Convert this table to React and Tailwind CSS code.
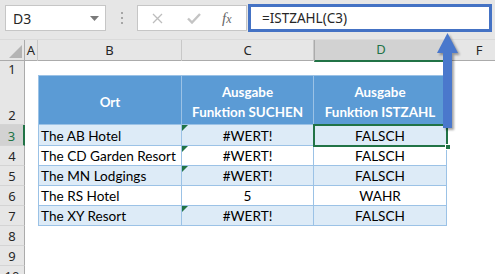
import React from "react";

const ui = { fontFamily: '"Noto Sans", "Open Sans", sans-serif' };
const cell = { fontFamily: 'Lato, "Open Sans", sans-serif' };

// Excel-like sheet rows under the table header
const rows = [
  { n: 3, ort: "The AB Hotel", c: "#WERT!", d: "FALSCH", err: true, fill: true, h: "h-[21px]" },
  { n: 4, ort: "The CD Garden Resort", c: "#WERT!", d: "FALSCH", err: true, fill: false, h: "h-[20px]" },
  { n: 5, ort: "The MN Lodgings", c: "#WERT!", d: "FALSCH", err: true, fill: true, h: "h-[20px]" },
  { n: 6, ort: "The RS Hotel", c: "5", d: "WAHR", err: false, fill: false, h: "h-[20px]" },
  { n: 7, ort: "The XY Resort", c: "#WERT!", d: "FALSCH", err: true, fill: true, h: "h-[20px]" },
];

const cols = "grid grid-cols-[25px_13px_144px_132px_133px_64px] w-[511px]";

function RowHead({ n, active, className = "" }) {
  return (
    <div
      className={`flex items-end justify-center text-[13px] leading-[17px] border-b border-[#d4d4d4] ${
        active
          ? "bg-[#d2d2d2] text-[#217346] border-r-2 border-r-[#217346]"
          : "bg-[#e6e6e6] text-[#262626] border-r border-r-[#ababab]"
      } ${className}`}
      style={ui}
    >
      {n}
    </div>
  );
}

function ErrMark() {
  return (
    <svg className="absolute left-0 top-0" width="6" height="6" viewBox="0 0 6 6">
      <polygon points="0,0 6,0 0,6" fill="#217346" />
    </svg>
  );
}

export default function App() {
  return (
    <div className="relative w-[495px] h-[274px] overflow-hidden bg-white">
      {/* Formula bar */}
      <div className="h-[40px] bg-[#e6e6e6] flex items-start pt-[5px] pl-[5px] border-b border-[#dadada]">
        <div className="w-[101px] h-[26px] bg-white border border-[#c6c6c6] flex items-center justify-between pl-[7px] pr-[6px]">
          <span className="text-[14px] text-[#262626]" style={ui}>
            D3
          </span>
          <svg width="9" height="5" viewBox="0 0 9 5">
            <polygon points="0,0 9,0 4.5,5" fill="#7a7a7a" />
          </svg>
        </div>
        <div className="w-[31px] h-[26px] flex flex-col items-center justify-center gap-[3px]">
          <span className="w-[2px] h-[2px] bg-[#a6a6a6]" />
          <span className="w-[2px] h-[2px] bg-[#a6a6a6]" />
          <span className="w-[2px] h-[2px] bg-[#a6a6a6]" />
        </div>
        <div className="w-[110px] h-[26px] bg-white border border-[#c6c6c6] flex items-center">
          <svg className="ml-[14px]" width="11" height="11" viewBox="0 0 11 11">
            <path d="M1 1 L10 10 M10 1 L1 10" stroke="#bdbdbd" strokeWidth="1.3" />
          </svg>
          <svg className="ml-[24px]" width="14" height="11" viewBox="0 0 14 11">
            <path d="M1 5.5 L5 9.5 L13 1" stroke="#c4c4c4" strokeWidth="2.4" fill="none" />
          </svg>
          <span
            className="ml-[21px] text-[15px] italic text-[#666] leading-none"
            style={{ fontFamily: '"Liberation Serif", serif' }}
          >
            f<span className="text-[12px]">x</span>
          </span>
        </div>
        <div className="ml-[1px] -mt-[1px] w-[244px] h-[28px] bg-white border-[3px] border-[#4472c4] flex items-center pl-[11px]">
          <span className="text-[13.5px] text-[#262626]" style={ui}>
            =ISTZAHL(C3)
          </span>
        </div>
      </div>

      {/* Column letters */}
      <div className={`${cols} h-[21px] bg-[#e6e6e6] border-b border-[#ababab]`} style={ui}>
        <div className="relative border-r border-[#ababab]">
          <svg className="absolute left-[9px] top-[5px]" width="13" height="13" viewBox="0 0 13 13">
            <polygon points="13,0 13,13 0,13" fill="#b4b4b4" />
          </svg>
        </div>
        {["A", "B", "C"].map((l) => (
          <div
            key={l}
            className="flex items-center justify-center text-[13px] text-[#262626] border-r border-[#c8c8c8]"
          >
            {l}
          </div>
        ))}
        <div className="flex items-center justify-center text-[13px] text-[#217346] bg-[#d2d2d2] border-l border-[#ababab] border-b-2 border-b-[#217346] -mb-[1px]">
          D
        </div>
        <div className="flex items-center justify-center text-[13px] text-[#262626]">F</div>
      </div>

      {/* Row 1 */}
      <div className={`${cols} h-[14px]`}>
        <RowHead n={1} className="leading-[14px]" />
      </div>

      {/* Row 2: table header */}
      <div className={`${cols} h-[50px]`}>
        <RowHead n={2} />
        <div />
        {["Ort", "Ausgabe\nFunktion SUCHEN", "Ausgabe\nFunktion ISTZAHL"].map((t, i) => (
          <div
            key={i}
            className={`bg-[#5b9bd5] text-white font-bold text-[13.4px] leading-[20px] flex items-center justify-center text-center whitespace-pre-line pt-[4px] border-t border-b border-r border-[#9bc2e6] ${
              i === 0 ? "border-l" : ""
            }`}
            style={cell}
          >
            {t}
          </div>
        ))}
      </div>

      {/* Data rows */}
      {rows.map((r) => (
        <div key={r.n} className={`${cols} ${r.h}`}>
          <RowHead n={r.n} active={r.n === 3} />
          <div />
          <div
            className={`${r.fill ? "bg-[#ddebf7]" : "bg-white"} border-l border-r border-b border-[#9bc2e6] flex items-end pl-[2px] text-[13.6px] leading-[18px] text-black`}
            style={cell}
          >
            {r.ort}
          </div>
          <div
            className={`relative ${r.fill ? "bg-[#ddebf7]" : "bg-white"} border-r border-b border-[#9bc2e6] flex items-end justify-center text-[13.6px] leading-[18px] text-black`}
            style={cell}
          >
            {r.err && <ErrMark />}
            {r.c}
          </div>
          <div
            className={`${r.fill ? "bg-[#ddebf7]" : "bg-white"} border-r border-b border-[#9bc2e6] flex items-end justify-center text-[13.6px] leading-[18px] text-black`}
            style={cell}
          >
            {r.d}
          </div>
        </div>
      ))}

      {/* Empty rows */}
      {[8, 9, 10].map((n) => (
        <div key={n} className={`${cols} h-[20px]`}>
          <RowHead n={n} />
        </div>
      ))}

      {/* Selected cell D3 */}
      <div className="absolute left-[313px] top-[124px] w-[135px] h-[23px] border-2 border-[#217346]" />
      <div className="absolute left-[445px] top-[144px] w-[6px] h-[6px] bg-[#217346] border border-white" />

      {/* Callout arrow */}
      <svg
        className="absolute left-[434px] top-[30px] drop-shadow-[2px_2px_1px_rgba(0,0,0,0.35)]"
        width="28"
        height="102"
        viewBox="0 0 28 102"
      >
        <rect x="9" y="21" width="9" height="77" fill="#4a78cc" />
        <polygon points="3,23 13.5,3 24,23" fill="#4a78cc" />
      </svg>
    </div>
  );
}
